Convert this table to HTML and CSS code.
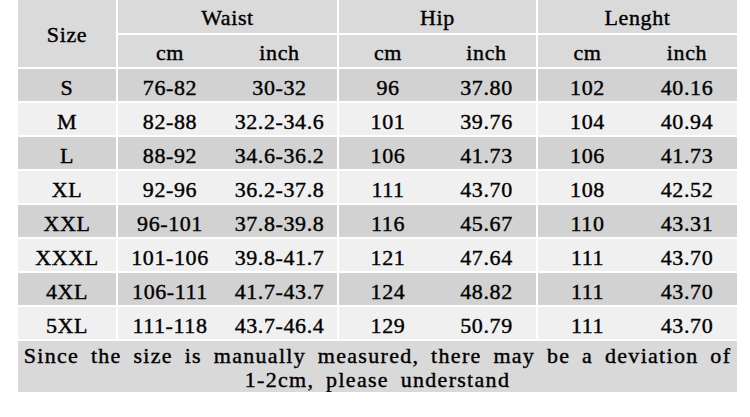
FILE: index.html
```html
<!DOCTYPE html>
<html>
<head>
<meta charset="utf-8">
<link rel="stylesheet" href="styles.css">
</head>
<body>
<table class="size-table">
  <colgroup>
    <col class="c-size">
    <col class="c-wcm">
    <col class="c-winch">
    <col class="c-hcm">
    <col class="c-hinch">
    <col class="c-lcm">
    <col class="c-linch">
  </colgroup>
  <thead>
    <tr class="head1">
      <th rowspan="2" class="sep">Size</th>
      <th colspan="2" class="sep">Waist</th>
      <th colspan="2" class="sep">Hip</th>
      <th colspan="2">Lenght</th>
    </tr>
    <tr class="head2">
      <th>cm</th><th class="sep">inch</th>
      <th>cm</th><th class="sep">inch</th>
      <th>cm</th><th>inch</th>
    </tr>
  </thead>
  <tbody>
    <tr class="dark"><td class="sep">S</td><td>76-82</td><td class="sep">30-32</td><td>96</td><td class="sep">37.80</td><td>102</td><td>40.16</td></tr>
    <tr class="light"><td class="sep">M</td><td>82-88</td><td class="sep">32.2-34.6</td><td>101</td><td class="sep">39.76</td><td>104</td><td>40.94</td></tr>
    <tr class="dark"><td class="sep">L</td><td>88-92</td><td class="sep">34.6-36.2</td><td>106</td><td class="sep">41.73</td><td>106</td><td>41.73</td></tr>
    <tr class="light"><td class="sep">XL</td><td>92-96</td><td class="sep">36.2-37.8</td><td>111</td><td class="sep">43.70</td><td>108</td><td>42.52</td></tr>
    <tr class="dark"><td class="sep">XXL</td><td>96-101</td><td class="sep">37.8-39.8</td><td>116</td><td class="sep">45.67</td><td>110</td><td>43.31</td></tr>
    <tr class="light"><td class="sep">XXXL</td><td>101-106</td><td class="sep">39.8-41.7</td><td>121</td><td class="sep">47.64</td><td>111</td><td>43.70</td></tr>
    <tr class="dark"><td class="sep">4XL</td><td>106-111</td><td class="sep">41.7-43.7</td><td>124</td><td class="sep">48.82</td><td>111</td><td>43.70</td></tr>
    <tr class="light"><td class="sep">5XL</td><td>111-118</td><td class="sep">43.7-46.4</td><td>129</td><td class="sep">50.79</td><td>111</td><td>43.70</td></tr>
  </tbody>
  <tfoot>
    <tr class="foot">
      <td colspan="7">Since the size is manually measured, there may be a deviation of<br>1-2cm, please understand</td>
    </tr>
  </tfoot>
</table>
</body>
</html>
```

FILE: styles.css
```css
html, body {
  margin: 0;
  padding: 0;
  background: #ffffff;
}

.size-table {
  margin-left: 18px;
  width: 719px;
  table-layout: fixed;
  border-collapse: collapse;
  font-family: "Liberation Serif", "Times New Roman", serif;
  font-size: 22px;
  letter-spacing: 0.6px;
  color: #000;
  -webkit-text-stroke: 0.4px #000;
}

.c-size { width: 99px; }
.c-wcm { width: 105px; }
.c-winch { width: 116px; }
.c-hcm { width: 99px; }
.c-hinch { width: 100px; }
.c-lcm { width: 100px; }
.c-linch { width: 100px; }

.size-table th,
.size-table td {
  padding: 0;
  text-align: center;
  vertical-align: middle;
  white-space: nowrap;
  border-bottom: 2px solid #ffffff;
  font-weight: normal;
}

.size-table .sep {
  border-right: 2px solid #ffffff;
}

.head1 th {
  height: 31px;
  background: #dadada;
  padding-top: 2px;
}

.head1 th.sep[rowspan] {
  padding-top: 3px;
}

.head2 th {
  height: 28px;
  background: #dadada;
  padding-top: 4px;
}

.dark td {
  height: 27px;
  background: #d2d2d2;
  padding-top: 5px;
}

.light td {
  height: 27px;
  background: #f0f0f0;
  padding-top: 5px;
}

.foot td {
  height: 49px;
  background: #d9d9d9;
  line-height: 24px;
  white-space: nowrap;
  letter-spacing: 1.3px;
  word-spacing: 5px;
  padding-top: 2px;
  border-bottom: none;
}
```
